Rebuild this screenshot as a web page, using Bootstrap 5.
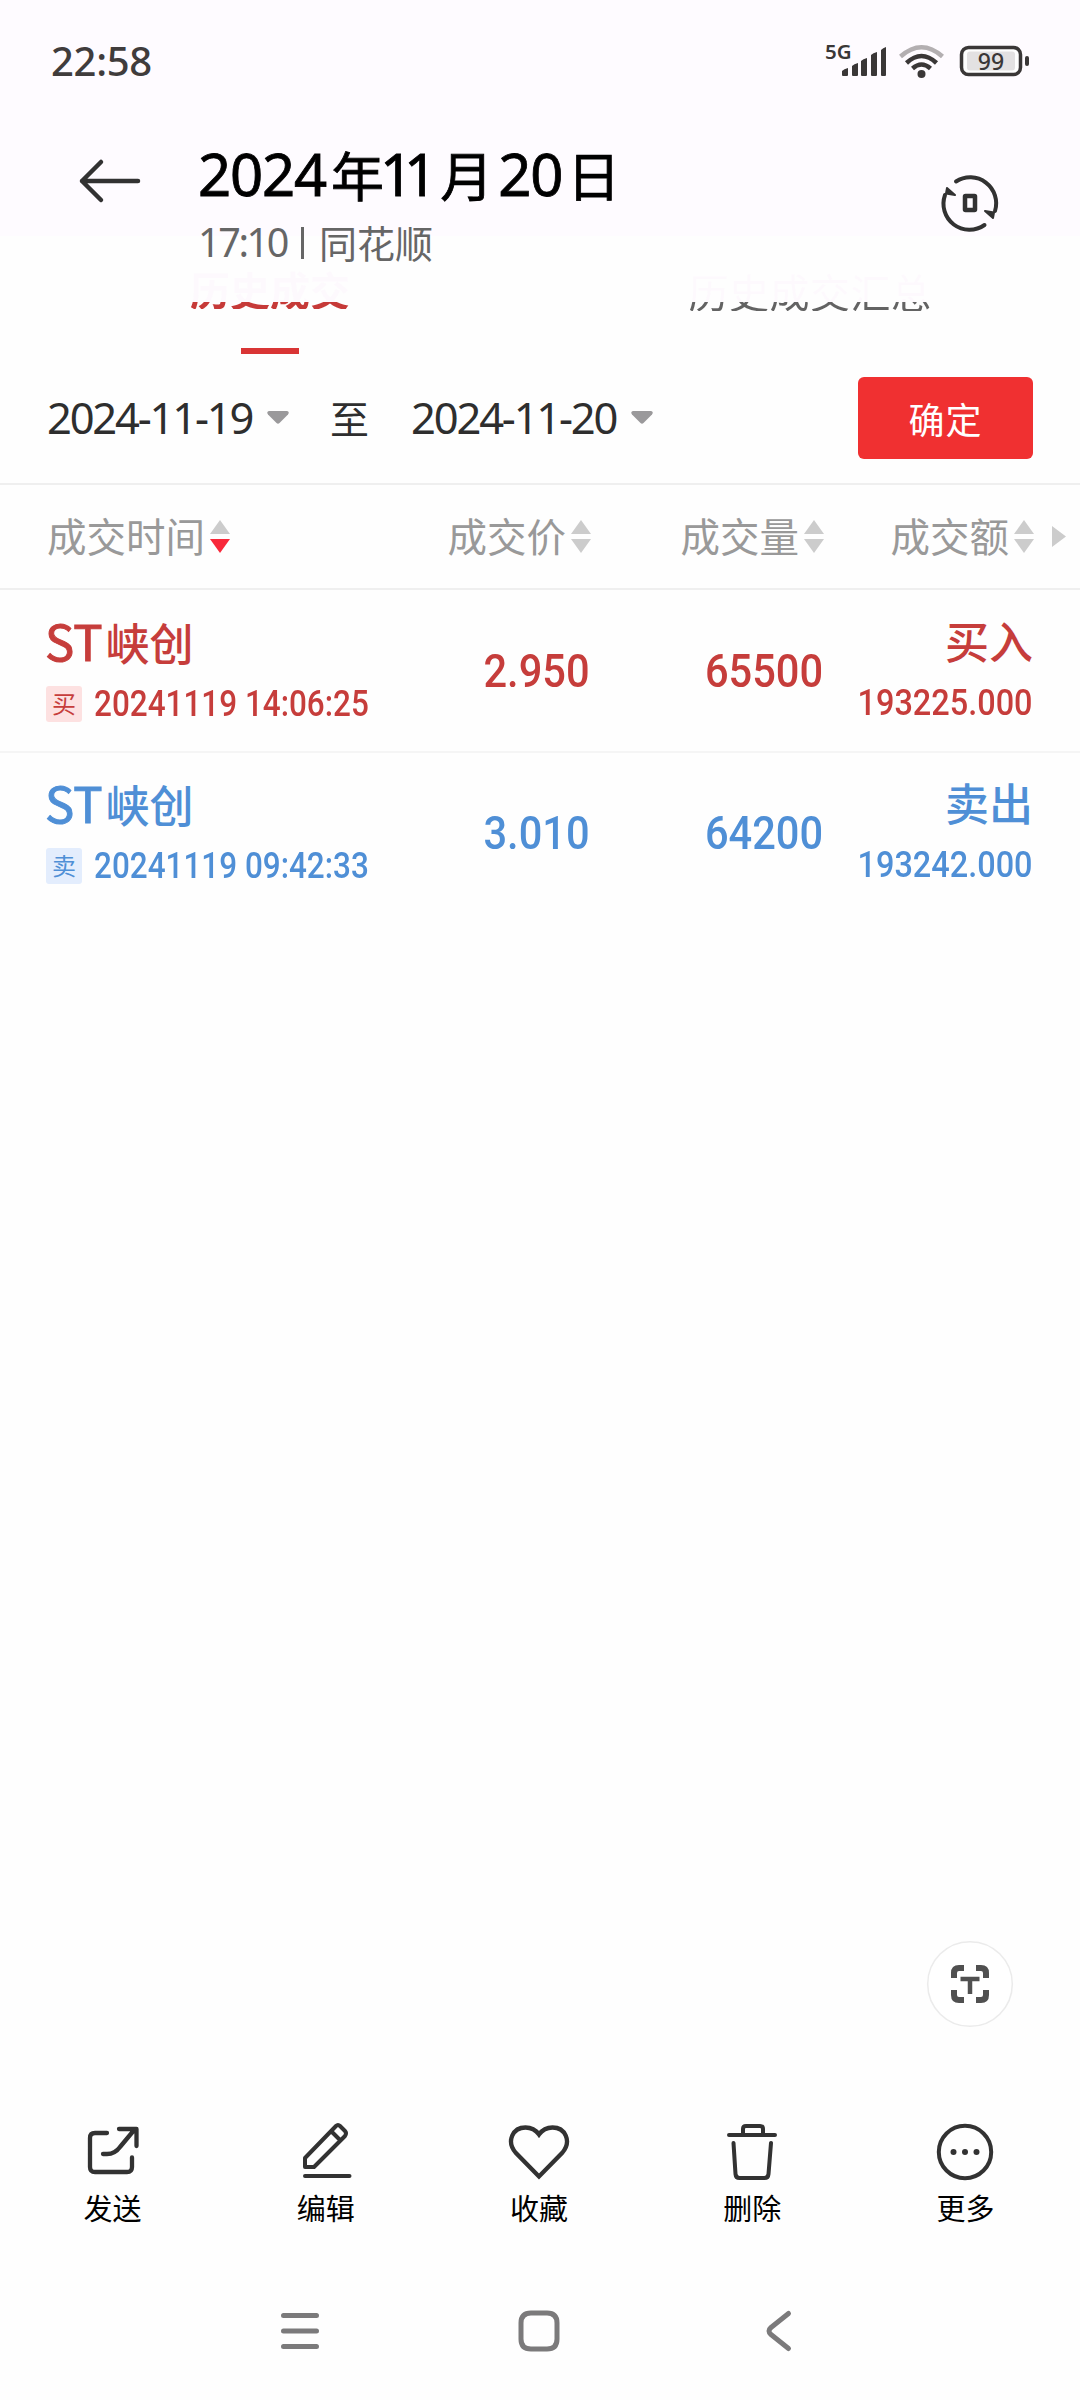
<!DOCTYPE html>
<html lang="zh-CN">
<head>
<meta charset="utf-8">
<meta name="viewport" content="width=device-width, initial-scale=1">
<title>历史成交</title>
<link rel="stylesheet" href="https://cdn.jsdelivr.net/npm/bootstrap@5.3.0/dist/css/bootstrap.min.css">
<style>
  body { background: #fefefe; font-family: "Noto Sans", "Noto Sans CJK SC", sans-serif; color: #2e2e2e; }
  .screen { width: 1080px; height: 2400px; overflow: hidden; }
  .cjk { font-family: "Noto Sans CJK SC", sans-serif; }
  .top-area { height: 236px; background: #fefbff; }
  .status { height: 122px; padding: 0 51px 0 51px; }
  .clock { font-size: 40px; line-height: 60px; font-weight: 500; color: #403c3c; letter-spacing: -.3px; }
  .note-head { padding: 20px 82px 0 79px; height: 180px; }
  .note-title { font-size: 58px; line-height: 64px; color: #000; white-space: nowrap; -webkit-text-stroke: .8px #000; }
  .note-title .digits { letter-spacing: -1.2px; }
  .note-title .cjk { font-size: 53px; }
  .note-title .tight { letter-spacing: -9px; margin-left: -4px; margin-right: 12px; }
  .note-sub { font-size: 39.5px; line-height: 50px; margin-top: 11px; color: #666; }
  .note-sub .hour { letter-spacing: -2.4px; }
  .note-sub .split { width: 3px; height: 32px; background: #666; margin: 2px 15px 0 14px; }
  .note-sub .cjk { font-size: 38px; }
  .tabs { margin-top: 33px; height: 85px; }
  .tab-label { font-size: 40px; line-height: 40px; color: transparent; -webkit-background-clip: text; background-clip: text; white-space: nowrap; }
  .tab-on { font-weight: 700; background-image: linear-gradient(#fdf9fd 33px, #c63a38 33px); }
  .tab-off { letter-spacing: .5px; background-image: linear-gradient(#fdf9fd 31px, #636363 31px); }
  .tab-bar { width: 58px; height: 6px; background: #d93535; }
  .range-row { height: 129px; padding: 0 47px 2px 47px; }
  .range-date { font-size: 43.5px; line-height: 60px; letter-spacing: -2.2px; white-space: nowrap; margin-top: -2px; }
  .caret { margin-left: 15px; }
  .btn-ok { width: 175px; height: 82px; background: #f03031; color: #fff; border-radius: 6px; font-size: 36px; letter-spacing: 1px; line-height: 48px; border: 0; margin-top: 1px; }
  .cols { display: grid; grid-template-columns: 281px 263px 233px 210px 1fr; padding-left: 46px; align-items: center; }
  .cols-head { height: 107px; border-top: 2px solid #efefef; border-bottom: 2px solid #efefef; font-size: 39.5px; line-height: 60px; color: #999; white-space: nowrap; }
  .cols-head span b { font-weight: 400; margin-top: -4px; margin-right: 5px; }
  .cols-head > span { position: relative; left: 1px; }
  .trade { height: 161px; }
  .trade + .trade { border-top: 2px solid #f5f5f5; }
  .num { font-family: Roboto, sans-serif; font-weight: 500; white-space: nowrap; }
  .num span { display: inline-block; transform: scaleX(.895); transform-origin: right; }
  .stack { padding-bottom: 3px; }
  .stock { font-size: 44px; line-height: 50px; margin-bottom: 17px; font-weight: 500; }
  .stock .latin { font-size: 49px; font-weight: 400; -webkit-text-stroke: 1px currentColor; margin: 0 3px 0 -1px; }
  .side-tag { flex: none; width: 36px; height: 36px; border-radius: 3px; font-size: 24px; line-height: 34px; text-align: center; }
  .stamp { font-size: 36px; line-height: 40px; width: 280px; margin-left: 12px; }
  .stamp span { transform: scaleX(.874); transform-origin: left; }
  .figure-num { font-size: 46.5px; line-height: 60px; }
  .amount { font-size: 37px; line-height: 40px; padding-top: 1px; }
  .amount span { transform: scaleX(.877); }
  .buy { color: #c63d3b; } .buy .side-tag { background: #fde1e1; }
  .sell { color: #4f8fd6; } .sell .side-tag { background: #e3edfd; }
  .fab { position: absolute; left: 927px; top: 1941px; }
  .tools { height: 130px; padding: 0 8px 0 6px; }
  .tool-label { font-size: 29px; line-height: 36px; color: #000; margin-top: 8px; }
  svg { display: block; flex: none; overflow: visible; }
</style>
<script src="https://cdn.jsdelivr.net/npm/bootstrap@5.3.0/dist/js/bootstrap.bundle.min.js"></script>
</head>
<body>
<svg width="0" height="0" class="position-absolute">
  <symbol id="sort" viewBox="0 0 20 33"><path d="M10 0 20 14H0z" fill="#ccc"/><path d="M0 19h20L10 33z" fill="currentColor"/></symbol>
</svg>
<div class="screen position-relative d-flex flex-column">
  <header class="top-area">
    <div class="status d-flex justify-content-between align-items-center">
      <span class="clock">22:58</span>
      <svg width="204" height="36" viewBox="825 42 204 36">
        <text x="825" y="58" font-family="Noto Sans" font-size="20.500" font-weight="600" fill="#3a3737">5G</text>
        <g fill="#3a3737">
          <path d="M842 74v-4q2-2 6-3v7q0 1-1 1h-4q-1 0-1-1zM852 74v-9q2-2 6-3v12q0 1-1 1h-4q-1 0-1-1zM861 74V60q2-2 6-3v17q0 1-1 1h-4q-1 0-1-1zM871 74V54q2-2 6-3v23q0 1-1 1h-4q-1 0-1-1zM881 74V49q2-2 5-3v28q0 1-1 1h-3q-1 0-1-1z"/>
          <rect x="1025" y="55" width="4" height="10" rx="2"/>
        </g>
        <g fill="none" stroke-width="4.500">
          <path d="M900.500 55.500Q921.500 37 942.500 55.500" stroke="#b3afb1"/>
          <path d="M906.500 62Q921.500 48 936.500 62M912.500 67.500Q921.500 59.500 930.500 67.500" stroke="#3a3737"/>
        </g>
        <circle cx="921.500" cy="73" r="4" fill="#3a3737"/>
        <rect x="961.500" y="46.500" width="59" height="27" rx="7" fill="#fefefe" stroke="#3a3737" stroke-width="3.500"/>
        <rect x="967" y="50.500" width="48" height="19" rx="3" fill="#e3e1e2"/>
        <text x="991" y="68.500" text-anchor="middle" font-family="Noto Sans" font-size="23" font-weight="500" fill="#3a3737">99</text>
      </svg>
    </div>
    <div class="note-head d-flex align-items-start">
      <svg width="62" height="44" viewBox="79 159 62 44" style="margin-top:17px" fill="none" stroke="#323232" stroke-width="4.500" stroke-linecap="round" stroke-linejoin="round"><path d="M138 181H82M101 162 82 181l19 19"/></svg>
      <div class="flex-grow-1" style="margin-left:57px">
        <div class="note-title d-flex"><span class="digits">2024</span><span class="cjk" style="margin-left:5px">年</span><span class="tight">11</span><span class="cjk">月</span><span class="digits" style="margin-left:5px">20</span><span class="cjk" style="margin-left:5px">日</span></div>
        <div class="note-sub d-flex align-items-center"><span class="hour">17:10</span><span class="split"></span><span class="cjk">同花顺</span></div>
      </div>
      <svg width="56" height="56" viewBox="942 175 56 56" style="margin-top:33px" fill="none" stroke="#323232" stroke-width="4" stroke-linecap="round"><path d="M956 181.500A26 26 0 0 1 995 211M984.500 225A26 26 0 0 1 945 195"/><path d="M947 188l8 7-9-1.500zM993 218l-8-7 9 1.500z" fill="#323232" stroke-width="2" stroke-linejoin="round"/><rect x="965" y="196" width="10" height="14" rx=".5" stroke-width="4.500"/></svg>
    </div>
  </header>

  <nav class="tabs d-flex">
    <div class="w-50 d-flex flex-column align-items-center">
      <span class="tab-label tab-on cjk">历史成交</span>
      <span class="tab-bar" style="margin-top:39px"></span>
    </div>
    <div class="w-50 d-flex flex-column align-items-center"><span class="tab-label tab-off cjk" style="margin-top:2px">历史成交汇总</span></div>
  </nav>

  <section class="range-row d-flex align-items-center">
    <span class="range-date">2024-11-19</span>
    <svg class="caret" width="22" height="13" viewBox="0 0 22 13"><path d="M2 0h18q3 1 1 3.500l-8.500 8.500q-1.500 1.500-3 0L1 3.500Q-1 1 2 0z" fill="#9a999b"/></svg>
    <span class="range-date cjk" style="margin-left:41px;font-size:39px;letter-spacing:0">至</span>
    <span class="range-date" style="margin-left:42px">2024-11-20</span>
    <svg class="caret" width="22" height="13" viewBox="0 0 22 13"><path d="M2 0h18q3 1 1 3.500l-8.500 8.500q-1.500 1.500-3 0L1 3.500Q-1 1 2 0z" fill="#9a999b"/></svg>
    <button class="btn btn-ok cjk ms-auto p-0">确定</button>
  </section>

  <div class="cols cols-head cjk">
    <span class="d-flex align-items-center"><b>成交时间</b><svg width="20" height="33" style="color:#f8283a"><use href="#sort"/></svg></span>
    <span class="d-flex align-items-center justify-content-end"><b>成交价</b><svg width="20" height="33" style="color:#ccc"><use href="#sort"/></svg></span>
    <span class="d-flex align-items-center justify-content-end"><b>成交量</b><svg width="20" height="33" style="color:#ccc"><use href="#sort"/></svg></span>
    <span class="d-flex align-items-center justify-content-end"><b>成交额</b><svg width="20" height="33" style="color:#ccc"><use href="#sort"/></svg></span>
    <svg width="14" height="21" viewBox="0 0 14 21" style="margin-left:19px"><path d="M0 0 14 10.500 0 21z" fill="#ccc"/></svg>
  </div>

  <div class="cols trade buy">
    <div class="stack">
      <div class="stock cjk"><span class="latin">ST</span>峡创</div>
      <div class="d-flex align-items-center"><span class="side-tag cjk">买</span><div class="num stamp"><span>20241119 14:06:25</span></div></div>
    </div>
    <div class="num figure-num text-end"><span>2.950</span></div>
    <div class="num figure-num text-end"><span>65500</span></div>
    <div class="stack text-end">
      <div class="stock cjk">买入</div>
      <div class="num amount"><span>193225.000</span></div>
    </div>
  </div>
  <div class="cols trade sell">
    <div class="stack">
      <div class="stock cjk"><span class="latin">ST</span>峡创</div>
      <div class="d-flex align-items-center"><span class="side-tag cjk">卖</span><div class="num stamp"><span>20241119 09:42:33</span></div></div>
    </div>
    <div class="num figure-num text-end"><span>3.010</span></div>
    <div class="num figure-num text-end"><span>64200</span></div>
    <div class="stack text-end">
      <div class="stock cjk">卖出</div>
      <div class="num amount"><span>193242.000</span></div>
    </div>
  </div>

  <svg class="fab" width="86" height="86" viewBox="927 1941 86 86"><circle cx="970" cy="1984" r="42.300" fill="#fff" stroke="#ebebeb" stroke-width="1.500"/><path d="M954 1978v-5q0-5 5-5h5M976 1968h5q5 0 5 5v5M986 1990v5q0 5-5 5h-5M964 2000h-5q-5 0-5-5v-5" fill="none" stroke="#505050" stroke-width="6"/><path d="M960.500 1979h19M970 1979v15" stroke="#505050" stroke-width="4.500" fill="none"/></svg>

  <footer class="mt-auto" style="height:282px">
    <div class="tools d-flex" style="margin-top:3px">
      <div class="flex-fill w-25 d-flex flex-column align-items-center">
        <svg width="58" height="60" viewBox="84 2121 58 60" fill="none" stroke="#323232" stroke-width="4.300" stroke-linecap="round" stroke-linejoin="round"><path d="M107 2133H95q-5 0-5 5v29q0 5 5 5h32q5 0 5-5v-9.500M103 2154h4q8 0 13-7l15-18M119 2129h17.500v17"/></svg>
        <span class="tool-label cjk">发送</span>
      </div>
      <div class="flex-fill w-25 d-flex flex-column align-items-center">
        <svg width="58" height="60" viewBox="297 2121 58 60" fill="none" stroke="#323232" stroke-width="4" stroke-linecap="round" stroke-linejoin="round"><path d="M305 2167v-9l31-32q2-2 4 0l5 5q2 2 0 5l-31 31zM331.500 2131.500l8 8M305 2176h44.500"/></svg>
        <span class="tool-label cjk">编辑</span>
      </div>
      <div class="flex-fill w-25 d-flex flex-column align-items-center">
        <svg width="60" height="60" viewBox="509 2121 60 60" fill="none" stroke="#323232" stroke-width="4.300"><path d="M539 2176.500 515.500 2152.500C506 2141 513 2127.500 525.500 2127.500Q534 2127.500 539 2134.500Q544 2127.500 552.500 2127.500C565 2127.500 572 2141 562.500 2152.500Z"/></svg>
        <span class="tool-label cjk">收藏</span>
      </div>
      <div class="flex-fill w-25 d-flex flex-column align-items-center">
        <svg width="58" height="60" viewBox="723 2121 58 60" fill="none" stroke="#323232" stroke-width="4" stroke-linecap="round" stroke-linejoin="round"><path d="M729 2135h46M743 2134v-5q0-3 3-3h14q3 0 3 3v5M733.500 2143l2 31q.3 4 4 4h25q3.700 0 4-4l2.500-31"/></svg>
        <span class="tool-label cjk">删除</span>
      </div>
      <div class="flex-fill w-25 d-flex flex-column align-items-center">
        <svg width="58" height="60" viewBox="936 2121 58 60"><circle cx="965" cy="2152" r="26.200" fill="none" stroke="#323232" stroke-width="4"/><g fill="#323232"><circle cx="953.500" cy="2152" r="3"/><circle cx="965" cy="2152" r="3"/><circle cx="976.500" cy="2152" r="3"/></g></svg>
        <span class="tool-label cjk">更多</span>
      </div>
    </div>
    <div class="d-flex align-items-center" style="padding-left:281px;margin-top:59px">
      <svg width="510" height="42" viewBox="281 2310 510 42" fill="none" stroke="#7b7a7b" stroke-width="5" stroke-linecap="round" stroke-linejoin="round"><path d="M283.500 2315.500h33M283.500 2331h33M283.500 2346.500h33"/><path d="M531 2313h16q10 0 10 10v16q0 10-10 10h-16q-10 0-10-10v-16q0-10 10-10z"/><path d="M788.500 2313.500 771 2327.500q-4 3.500 0 7l17.500 14"/></svg>
    </div>
  </footer>
</div>
</body>
</html>
